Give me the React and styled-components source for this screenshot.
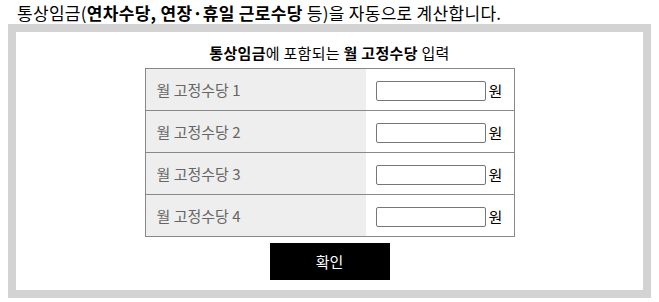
import styled, { createGlobalStyle } from "styled-components";

const GlobalStyle = createGlobalStyle`
  body {
    margin: 0;
    font-family: "Noto Sans CJK KR", "Noto Sans", sans-serif;
    background: #fff;
    color: #000;
  }
`;

const rows = [1, 2, 3, 4];

function App() {
  return (
    <Page>
      <GlobalStyle />
      <Title>
        통상임금(<b>연차수당, 연장·휴일 근로수당</b> 등)을 자동으로 계산합니다.
      </Title>
      <Frame>
        <SubTitle>
          <b>통상임금</b>에 포함되는 <b>월 고정수당</b> 입력
        </SubTitle>
        <Table>
          <tbody>
            {rows.map((n) => (
              <tr key={n}>
                <Label>월 고정수당 {n}</Label>
                <Field>
                  <Input type="text" />
                  <Unit>원</Unit>
                </Field>
              </tr>
            ))}
          </tbody>
        </Table>
        <Button>확인</Button>
      </Frame>
    </Page>
  );
}

const Page = styled.div`
  padding: 0 8px 5px 8px;
`;

const Title = styled.div`
  height: 24px;
  line-height: 26px;
  padding-left: 9px;
  font-size: 17px;
  letter-spacing: 0.3px;
  white-space: nowrap;

  b {
    font-weight: 700;
  }
`;

const Frame = styled.div`
  border: 8px solid #d3d3d3;
  display: flex;
  flex-direction: column;
  align-items: center;
  padding: 12px 0 10px 0;
`;

const SubTitle = styled.div`
  font-size: 15px;
  line-height: 18px;
  margin-bottom: 6px;
  letter-spacing: 0.3px;

  b {
    font-weight: 700;
  }
`;

const Table = styled.table`
  width: 370px;
  border-collapse: collapse;
  border: 1px solid #888;
`;

const Label = styled.td`
  width: 60%;
  height: 42px;
  padding: 0 0 0 11px;
  box-sizing: border-box;
  background: #eee;
  color: #666;
  font-size: 15px;
  border-top: 1px solid #888;
  border-bottom: 1px solid #888;
`;

const Field = styled.td`
  height: 42px;
  padding: 0 0 0 10px;
  box-sizing: border-box;
  background: #fff;
  border-top: 1px solid #888;
  border-bottom: 1px solid #888;
  white-space: nowrap;
  font-size: 15px;
`;

const Input = styled.input`
  width: 110px;
  height: 20px;
  box-sizing: border-box;
  border: 1px solid #767676;
  border-radius: 2px;
  padding: 0 3px;
  vertical-align: middle;
`;

const Unit = styled.span`
  margin-left: 2px;
  vertical-align: middle;
  color: #000;
`;

const Button = styled.button`
  margin-top: 6px;
  width: 120px;
  height: 37px;
  border: none;
  background: #000;
  color: #fff;
  font-family: "Noto Sans CJK KR", "Noto Sans", sans-serif;
  font-size: 15px;
  cursor: pointer;
`;

export default App;
